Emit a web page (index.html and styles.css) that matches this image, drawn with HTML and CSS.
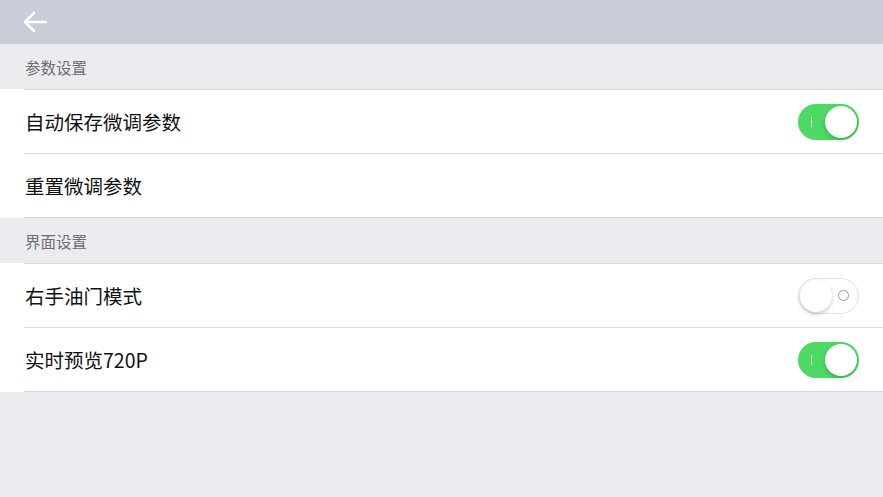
FILE: index.html
```html
<!DOCTYPE html>
<html>
<head>
<meta name="viewport" content="width=device-width, initial-scale=1">
<link rel="stylesheet" href="styles.css">
</head>
<body>

<div class="topbar">
  <svg class="back" width="26" height="24" viewBox="0 0 26 24">
    <path d="M24 12 H3 M12 3 L3 12 L12 21" fill="none" stroke="#fff" stroke-width="2.7" stroke-linecap="round" stroke-linejoin="round"/>
  </svg>
</div>

<div class="section">参数设置</div>
<div class="group">
  <div class="row">
    <span>自动保存微调参数</span>
    <div class="switch on"><span class="mark"></span><span class="knob"></span></div>
  </div>
  <div class="row">
    <span>重置微调参数</span>
  </div>
</div>

<div class="section">界面设置</div>
<div class="group">
  <div class="row">
    <span>右手油门模式</span>
    <div class="switch off"><span class="knob"></span><span class="mark"></span></div>
  </div>
  <div class="row">
    <span>实时预览720P</span>
    <div class="switch on"><span class="mark"></span><span class="knob"></span></div>
  </div>
</div>

</body>
</html>
```

FILE: styles.css
```css
body {
  margin: 0;
  background-color: #ebebf0;
  font-family: "Noto Sans CJK SC", "Noto Sans", sans-serif;
}

.topbar {
  height: 44px;
  background-color: #c8cdd7;
  display: flex;
  align-items: center;
  padding-left: 22px;
}

.section {
  height: 45px;
  padding-left: 25px;
  display: flex;
  align-items: center;
  font-size: 15.5px;
  color: #6d6d72;
}

.group {
  background-color: #fff;
}

.row {
  height: 64px;
  margin-left: 24px;
  padding-left: 1px;
  padding-right: 24px;
  display: flex;
  align-items: center;
  justify-content: space-between;
  font-size: 19.5px;
  color: #111;
  border-top: 1px solid #dcdce0;
  box-sizing: border-box;
}

.group .row:last-child {
  height: 65px;
  border-bottom: 1px solid #d6d6da;
}

.switch {
  width: 61px;
  height: 36px;
  border-radius: 18px;
  box-sizing: border-box;
  display: flex;
  align-items: center;
  padding: 2px;
}

.switch.on {
  background-color: #4cd964;
  justify-content: flex-end;
}

.switch.off {
  background-color: #fff;
  border: 1px solid #e2e2e2;
  padding: 1px;
}

.knob {
  width: 32px;
  height: 32px;
  border-radius: 50%;
  background-color: #fff;
  box-shadow: 0 2px 4px rgba(0,0,0,0.22);
}

.switch.on .mark {
  width: 1px;
  height: 10px;
  background-color: #e9f9ec;
  margin-right: 13px;
}

.switch.off .mark {
  width: 9px;
  height: 9px;
  border: 1.2px solid #9a9a9a;
  border-radius: 50%;
  margin-left: 6px;
}
```
